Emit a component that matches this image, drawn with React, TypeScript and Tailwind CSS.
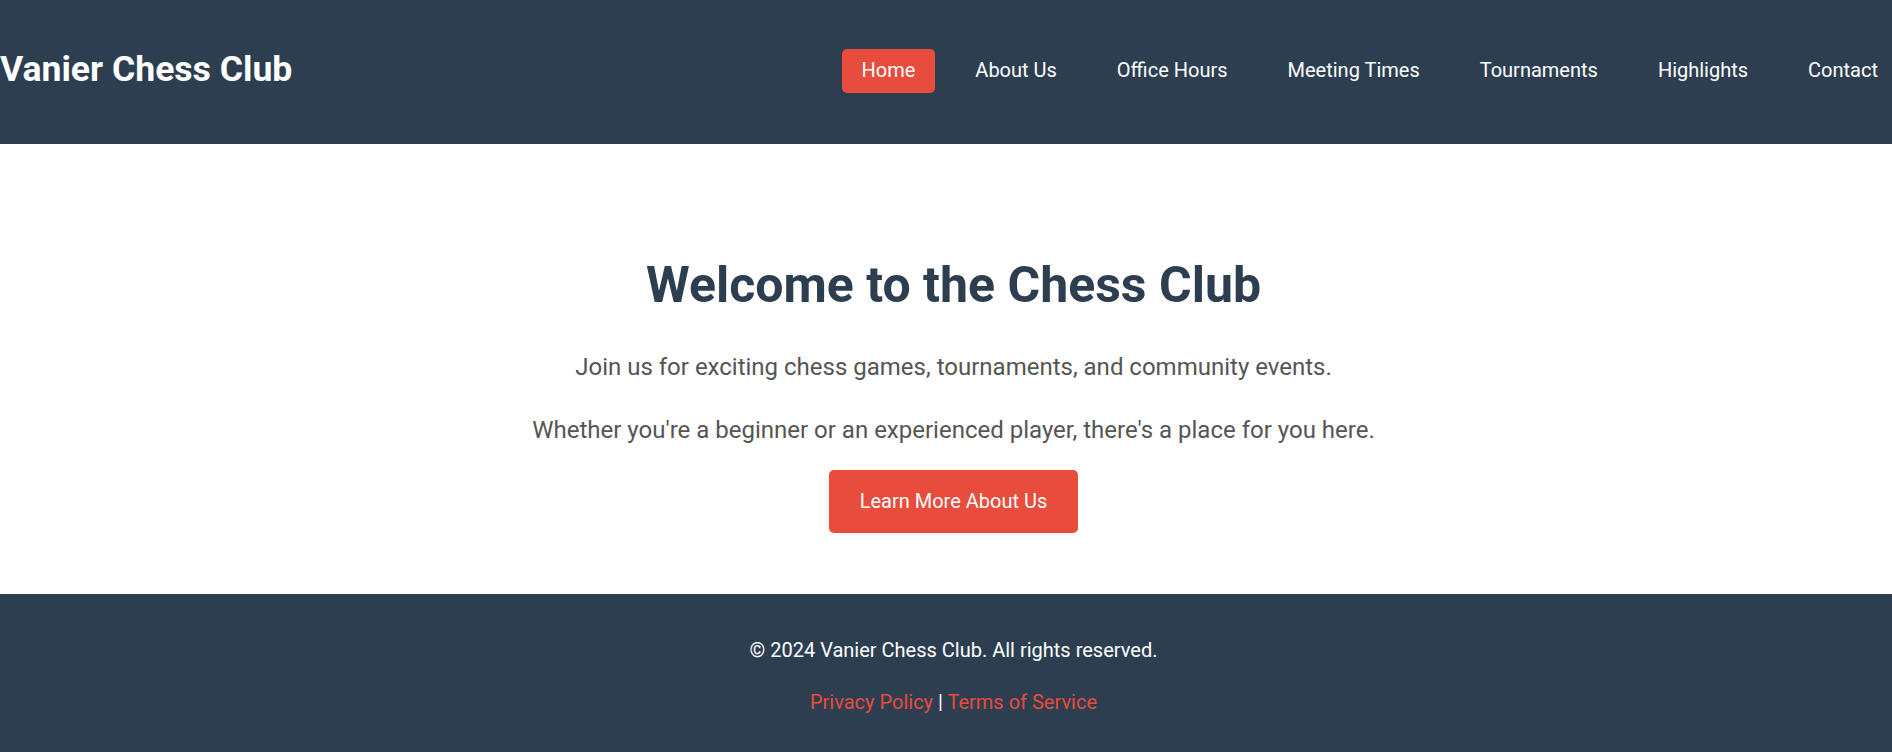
import React from "react";

const links = ["Home", "About Us", "Office Hours", "Meeting Times", "Tournaments", "Highlights", "Contact"];

export default function App() {
  return (
    <div className="min-h-[752px] flex flex-col bg-white text-[20px] overflow-hidden" style={{ fontFamily: "Roboto, 'Liberation Sans', sans-serif" }}>
      <header className="h-[144px] bg-[#2c3e50] flex items-center justify-between">
        <h1 className="text-[35.6px] font-bold text-white leading-none m-0 mb-[4px]">Vanier Chess Club</h1>
        <nav className="mb-[2px] mr-[-6px]">
          <ul className="flex gap-[20px]">
            {links.map((l, i) => (
              <li key={l}>
                <a className={`block px-[20px] py-[8px] text-[20px] leading-[27.5px] text-white rounded-[5px] ${i === 0 ? "bg-[#e74c3c]" : ""}`}>{l}</a>
              </li>
            ))}
          </ul>
        </nav>
      </header>
      <main className="h-[450px] flex flex-col items-center pt-[110.6px] pl-[15px]">
        <h2 className="text-[50px] font-bold leading-[1.2] text-[#2c3e50]">Welcome to the Chess Club</h2>
        <p className="mt-[33.7px] text-[24px] leading-[1.6] text-[#555]">Join us for exciting chess games, tournaments, and community events.</p>
        <p className="mt-[24.2px] text-[24px] leading-[1.6] text-[#555]">Whether you're a beginner or an experienced player, there's a place for you here.</p>
        <a className="mt-[20.7px] block bg-[#e74c3c] text-white text-[20px] leading-[31px] px-[31px] py-[16px] rounded-[5px]">Learn More About Us</a>
      </main>
      <footer className="bg-[#2c3e50] flex-1 flex flex-col items-center pt-[41.2px] pb-[34px] pl-[15px] text-white text-[20px] leading-[1.5]">
        <p>© 2024 Vanier Chess Club. All rights reserved.</p>
        <p className="mt-[22px]"><a className="text-[#e74c3c]">Privacy Policy</a> | <a className="text-[#e74c3c]">Terms of Service</a></p>
      </footer>
    </div>
  );
}
